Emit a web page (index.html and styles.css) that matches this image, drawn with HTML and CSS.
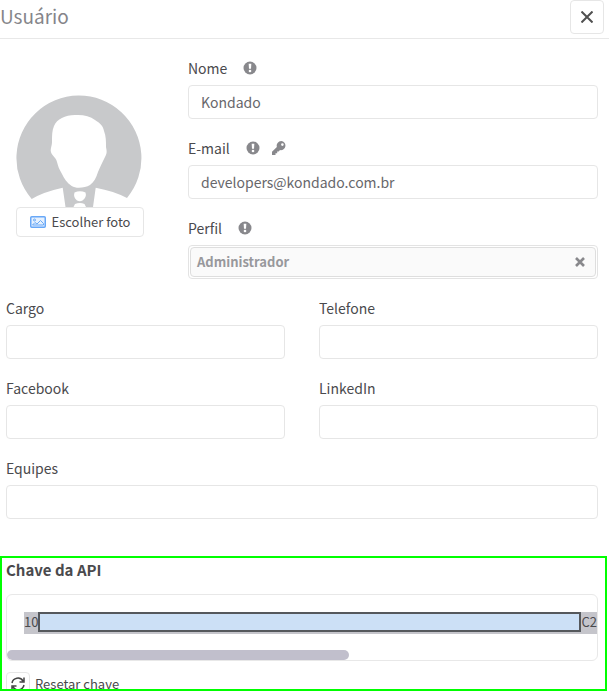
FILE: index.html
```html
<!DOCTYPE html>
<html lang="pt-BR">
<head>
  <meta charset="UTF-8">
  <meta name="viewport" content="width=device-width, initial-scale=1.0">
  <title>Usuário</title>
  <link rel="stylesheet" href="styles.css">
</head>
<body>
  <svg class="sprite" aria-hidden="true">
    <symbol id="info" viewBox="0 0 14 14">
      <circle cx="7" cy="7" r="6.5" fill="currentColor"/>
      <path d="M5.700 2.800h2.600l-.3 5H6z" fill="#fff"/>
      <circle cx="7" cy="10" r="1.300" fill="#fff"/>
    </symbol>
  </svg>

  <header class="header">
    <h1>Usuário</h1>
    <button type="button" class="close" aria-label="Fechar">
      <svg width="12" height="12" viewBox="0 0 12 12"><path d="M.5 .5l11 11M11.500 .5l-11 11" stroke="#505050" stroke-width="2"/></svg>
    </button>
  </header>

  <form class="form">
    <div class="profile">
      <div class="photo">
        <svg class="avatar" viewBox="0 0 126 112">
          <path d="M15.700 104A62.500 62.500 0 1 1 111 103Q98 96 79.700 92.700L77 112H49.500L46.700 92.700Q27 97 15.700 104z" fill="#c8c9cb"/>
          <path d="M59 20C67 19.500 74 21 79 25C84 28 87 31 88 36C90 41 90 46 90 52C91 57 91 58 89 62C86 68 84 72 82 77C80 83 78 87 74 90C69 93 60 94 55.700 91C51 88 48 83 46 79C43 74 42 71 41 67C40 62 35 60 34.700 55.700C35 51 36 51 36 46C36 40 36 36 38 31C41 24 49 20 59 20z" fill="#fff"/>
          <path d="M58.500 97.500Q64 95 69.500 97.500Q71 102 66.500 105.500Q64 107 61 105.500Q57 102 58.500 97.500zM59 109Q64 107 68.500 109L70 112H57.500z" fill="#fff"/>
        </svg>
        <button type="button" class="photo-button">
          <svg width="16" height="12" viewBox="0 0 16 12" fill="none" stroke="#68a8f7">
            <rect x=".75" y=".75" width="14.500" height="10.500" rx="1" fill="#e6f1fe" stroke-width="1.500"/>
            <circle cx="4.500" cy="4" r="1"/>
            <path d="M2.500 9l2.500-2.500 2 1.500 3.500-3.500 3 3V9z"/>
          </svg>
          Escolher foto
        </button>
      </div>

      <div class="fields">
        <div class="field">
          <div class="label-row">
            <label for="nome">Nome</label>
            <svg class="info"><use href="#info"/></svg>
          </div>
          <input type="text" id="nome" value="Kondado">
        </div>
        <div class="field">
          <div class="label-row">
            <label for="email">E-mail</label>
            <svg class="info"><use href="#info"/></svg>
            <svg class="key" viewBox="0 0 14 14">
              <path fill="currentColor" fill-rule="evenodd" d="M9.300 0a4.600 4.600 0 0 0-4.400 6L0 10.800V14h3.500v-1.700h1.700v-1.700h1.500l1.300-1.500A4.600 4.600 0 1 0 9.300 0zM10.400 2.300a1.300 1.300 0 1 1 0 2.600 1.300 1.300 0 0 1 0-2.600z"/>
            </svg>
          </div>
          <input type="email" id="email" value="developers@kondado.com.br">
        </div>
        <div class="field">
          <div class="label-row">
            <span id="perfil">Perfil</span>
            <svg class="info"><use href="#info"/></svg>
          </div>
          <div class="tag-box" role="group" aria-labelledby="perfil">
            <div class="tag">
              <span>Administrador</span>
              <button type="button" class="tag-remove" aria-label="Remover">
                <svg width="10" height="10" viewBox="0 0 10 10"><path d="M1 1l8 8M9 1L1 9" stroke="#88888c" stroke-width="2.600"/></svg>
              </button>
            </div>
          </div>
        </div>
      </div>
    </div>

    <div class="grid">
      <div class="field">
        <label for="cargo">Cargo</label>
        <input type="text" id="cargo">
      </div>
      <div class="field">
        <label for="telefone">Telefone</label>
        <input type="tel" id="telefone">
      </div>
      <div class="field">
        <label for="facebook">Facebook</label>
        <input type="text" id="facebook">
      </div>
      <div class="field">
        <label for="linkedin">LinkedIn</label>
        <input type="text" id="linkedin">
      </div>
      <div class="field wide">
        <label for="equipes">Equipes</label>
        <input type="text" id="equipes">
      </div>
    </div>
  </form>

  <section class="api">
    <h2>Chave da API</h2>
    <div class="key-box">
      <div class="key-text"><span>10</span><span class="mask"></span><span>C2</span></div>
      <div class="scroll-thumb"></div>
    </div>
    <div class="reset">
      <button type="button" id="reset" class="reset-button">
        <svg width="14" height="14" viewBox="0 0 14 14" fill="none" stroke="#444" stroke-width="1.500">
          <path d="M1 6a6 6 0 0 1 11-2M13 .5V5H8.500M13 8a6 6 0 0 1-11 2M1 13.500V9h4.500"/>
        </svg>
      </button>
      <label for="reset">Resetar chave</label>
    </div>
  </section>
</body>
</html>
```

FILE: styles.css
```css
* {
  box-sizing: border-box;
}
body {
  display: flex;
  flex-direction: column;
  height: 100vh;
  margin: 0;
  overflow: hidden;
  background-color: #fff;
  color: #4a4a4d;
  font-family: "Noto Sans CJK SC", "Noto Sans", sans-serif;
  font-size: 14px;
  line-height: 20px;
}
button, input {
  font: inherit;
  color: inherit;
  background-color: #fff;
  border: 1px solid #e6e6e6;
  border-radius: 4px;
}
button {
  padding: 0;
  cursor: pointer;
}
svg {
  display: block;
  flex: none;
}
.sprite {
  position: absolute;
  width: 0;
  height: 0;
}
.header {
  display: flex;
  justify-content: space-between;
  align-items: flex-start;
  flex: none;
  height: 39px;
  padding-right: 5px;
  border-bottom: 1px solid #e8e8e8;
}
h1 {
  margin: 0;
  color: #85858a;
  font-size: 19px;
  font-weight: normal;
  line-height: 32px;
}
.close {
  display: flex;
  align-items: center;
  justify-content: center;
  width: 34px;
  height: 34px;
}
.form {
  flex: none;
  padding: 19px 11px 0 6px;
}
.profile {
  display: flex;
}
.photo {
  flex: none;
  width: 182px;
  padding: 37px 0 0 10px;
}
.avatar {
  width: 126px;
  height: 112px;
}
.photo-button {
  display: flex;
  align-items: center;
  justify-content: center;
  gap: 6px;
  width: 128px;
  height: 30px;
  font-size: 13px;
}
.fields {
  flex: 1;
}
.field {
  display: flex;
  flex-direction: column;
  gap: 7px;
  margin-bottom: 19px;
}
.label-row {
  display: flex;
  align-items: center;
}
.info, .key {
  width: 14px;
  height: 14px;
  color: #88888c;
}
.info {
  margin-left: 16px;
}
.key {
  margin-left: 12px;
}
input {
  width: 100%;
  height: 34px;
  padding: 0 12px;
  color: #67676b;
}
.tag-box {
  height: 34px;
  padding: 1px;
  border: 1px solid #e3e3e3;
  border-radius: 4px;
}
.tag {
  display: flex;
  align-items: center;
  justify-content: space-between;
  height: 30px;
  padding: 0 10px 0 6px;
  background-color: #fafafa;
  border: 1px solid #dedede;
  border-radius: 4px;
  color: #98989c;
  font-size: 13px;
  font-weight: bold;
}
.tag-remove {
  border: 0;
  background: none;
}
.grid {
  display: grid;
  grid-template-columns: 1fr 1fr;
  column-gap: 34px;
}
.wide {
  grid-column: 1 / -1;
}
.api {
  flex: 1;
  min-height: 0;
  margin: 18px 2px 1px 0;
  padding: 2px 7px 0 4px;
  overflow: hidden;
  border: 2px solid #0f0;
}
h2 {
  margin: 0 0 14px;
  font-size: 15px;
  font-weight: bold;
  line-height: 20px;
}
.key-box {
  padding-top: 17px;
  overflow: hidden;
  border: 1px solid #e8e8e8;
  border-radius: 6px;
}
.key-text {
  display: flex;
  height: 22px;
  margin: 0 0 16px 17px;
  background-color: #c5c5cb;
  font-size: 13px;
}
.mask {
  flex: 1;
  height: 20px;
  background-color: #cce0f6;
  border: 2px solid #55585c;
}
.scroll-thumb {
  width: 58%;
  height: 10px;
  background-color: #c1bfcc;
  border-radius: 5px;
}
.reset {
  display: flex;
  align-items: center;
  gap: 5px;
  margin-top: 11px;
  font-size: 13px;
}
.reset-button {
  display: flex;
  align-items: center;
  justify-content: center;
  width: 24px;
  height: 24px;
}
```
